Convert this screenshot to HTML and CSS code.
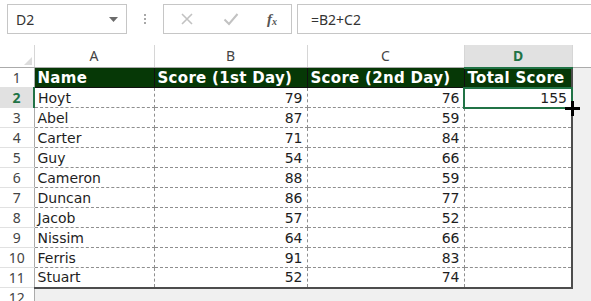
FILE: index.html
```html
<!DOCTYPE html>
<html lang="en">
<head>
    <meta charset="UTF-8">
    <title>Total Score</title>
    <link rel="stylesheet" href="styles.css">
</head>
<body>
    <!-- Barra della formula -->
    <div class="formula-bar">
        <div class="name-box">
            <span>D2</span>
            <svg class="caret" width="9" height="5" viewBox="0 0 9 5"><path d="M0 0H9L4.5 5Z" fill="#6b6b6b"/></svg>
        </div>
        <div class="grip"><i></i><i></i><i></i></div>
        <div class="fx-buttons">
            <svg width="14" height="14" viewBox="0 0 14 14"><path d="M2 2L12 12M12 2L2 12" stroke="#c2c2c2" stroke-width="1.6"/></svg>
            <svg width="16" height="14" viewBox="0 0 16 14"><path d="M1.5 7.5L6 12L14.5 2" stroke="#c2c2c2" stroke-width="2" fill="none"/></svg>
            <span class="fx">f<sub>x</sub></span>
        </div>
        <div class="formula">=B2+C2</div>
    </div>

    <!-- Foglio -->
    <table class="sheet">
        <colgroup>
            <col class="c-row"><col class="c-a"><col class="c-b"><col class="c-c"><col class="c-d"><col class="c-rest">
        </colgroup>
        <thead>
            <tr>
                <th class="corner"><svg width="8" height="8" viewBox="0 0 8 8"><path d="M8 0V8H0Z" fill="#dcdcdc"/></svg></th>
                <th>A</th><th>B</th><th>C</th><th class="active">D</th><th class="rest"></th>
            </tr>
        </thead>
        <tbody>
            <tr class="head">
                <th>1</th><td>Name</td><td>Score (1st Day)</td><td>Score (2nd Day)</td><td class="last">Total Score</td><td class="out"></td>
            </tr>
            <tr>
                <th class="active">2</th><td>Hoyt</td><td class="num">79</td><td class="num">76</td>
                <td class="num last sel">155<svg class="fill-cursor" width="15" height="15" viewBox="0 0 15 15"><path d="M7.5 0V15M0 7.5H15" stroke="#000" stroke-width="3"/></svg></td><td class="out"></td>
            </tr>
            <tr><th>3</th><td>Abel</td><td class="num">87</td><td class="num">59</td><td class="last"></td><td class="out"></td></tr>
            <tr><th>4</th><td>Carter</td><td class="num">71</td><td class="num">84</td><td class="last"></td><td class="out"></td></tr>
            <tr><th>5</th><td>Guy</td><td class="num">54</td><td class="num">66</td><td class="last"></td><td class="out"></td></tr>
            <tr><th>6</th><td>Cameron</td><td class="num">88</td><td class="num">59</td><td class="last"></td><td class="out"></td></tr>
            <tr><th>7</th><td>Duncan</td><td class="num">86</td><td class="num">77</td><td class="last"></td><td class="out"></td></tr>
            <tr><th>8</th><td>Jacob</td><td class="num">57</td><td class="num">52</td><td class="last"></td><td class="out"></td></tr>
            <tr><th>9</th><td>Nissim</td><td class="num">64</td><td class="num">66</td><td class="last"></td><td class="out"></td></tr>
            <tr><th>10</th><td>Ferris</td><td class="num">91</td><td class="num">83</td><td class="last"></td><td class="out"></td></tr>
            <tr class="end"><th>11</th><td>Stuart</td><td class="num">52</td><td class="num">74</td><td class="last"></td><td class="out"></td></tr>
            <tr class="below"><th>12</th><td colspan="5"></td></tr>
        </tbody>
    </table>
</body>
</html>
```

FILE: styles.css
```css
body {
    margin: 0;
    width: 591px;
    height: 301px;
    overflow: hidden;
    background: #fff;
    font-family: "DejaVu Sans", Verdana, sans-serif;
    color: #1e1e1e;
}

/* barra della formula */
.formula-bar {
    display: flex;
    align-items: center;
    height: 30px;
    padding: 4px 0 0 7px;
    font-family: "Noto Sans", "Open Sans", sans-serif;
    font-size: 14px;
    color: #333;
}
.name-box, .fx-buttons, .formula {
    box-sizing: border-box;
    height: 30px;
    border: 1px solid #c6c6c6;
    display: flex;
    align-items: center;
}
.name-box {
    width: 120px;
    padding: 0 8px;
    justify-content: space-between;
}
.grip {
    width: 36px;
    display: flex;
    flex-direction: column;
    align-items: center;
    gap: 2px;
}
.grip i {
    width: 2px;
    height: 2px;
    background: #a8a8a8;
}
.fx-buttons {
    width: 129px;
    padding: 0 14px 0 16px;
    justify-content: space-between;
}
.fx {
    font-family: "Liberation Serif", serif;
    font-style: italic;
    font-weight: bold;
    font-size: 15px;
    color: #555;
}
.fx sub {
    font-size: 10px;
    vertical-align: -1px;
}
.formula {
    flex: 1;
    margin-left: 5px;
    margin-right: -2px;
    padding-left: 13px;
}

/* foglio */
.sheet {
    margin-top: 11px;
    border-collapse: collapse;
    table-layout: fixed;
    width: 591px;
    font-size: 14px;
}
.c-row { width: 34px; }
.c-a { width: 120px; }
.c-b { width: 153px; }
.c-c { width: 157px; }
.c-d { width: 108px; }
.c-rest { width: 19px; }

.sheet thead th {
    height: 20px;
    padding: 0;
    font-family: "Noto Sans", "Open Sans", sans-serif;
    font-weight: normal;
    color: #444;
    border-right: 1px solid #d6d6d6;
    border-bottom: 1px solid #ababab;
    line-height: 20px;
}
.sheet thead th.corner {
    text-align: right;
    vertical-align: bottom;
    padding: 0 2px 2px 0;
    line-height: 0;
}
.sheet thead th.active {
    background: #e1e1e1;
    color: #217346;
    font-weight: bold;
    border-bottom: 2px solid #217346;
}
.sheet thead th.rest {
    border-right: none;
}

.sheet tbody tr {
    height: 20px;
}
.sheet tbody th {
    padding: 0;
    font-family: "Noto Sans", "Open Sans", sans-serif;
    font-weight: normal;
    color: #444;
    border-right: 1px solid #ababab;
    border-bottom: 1px solid #e1e1e1;
}
.sheet tbody th.active {
    background: #e1e1e1;
    color: #217346;
    font-weight: bold;
    border-right: 2px solid #217346;
}
.sheet td {
    padding: 0 4px 0 3px;
    border: 1px dashed #8f8f8f;
    white-space: nowrap;
    overflow: visible;
}
.sheet td.num {
    text-align: right;
}
.sheet td.last {
    border-right: 2px solid #4d4d4d;
}
.sheet td.out {
    background: #f0f0f0;
    border: none;
}
.sheet tr.head td {
    background: #063806;
    color: #fff;
    font-size: 15px;
    font-weight: bold;
    letter-spacing: 0.3px;
    border: 1px solid #111;
}
.sheet tr.head td.last {
    border-right: 2px solid #4d4d4d;
}
.sheet tr.head td.out {
    background: #f0f0f0;
    border: none;
}
.sheet tr.end td {
    border-bottom: 2px solid #4d4d4d;
}
.sheet tr.end td.out {
    border-bottom: none;
}
.sheet tr.below td {
    background: #f0f0f0;
    border: none;
}

/* cella selezionata */
.sheet td.sel {
    position: relative;
    outline: 2px solid #217346;
    outline-offset: -1px;
}
.fill-cursor {
    position: absolute;
    right: -9px;
    bottom: -9px;
}
```
